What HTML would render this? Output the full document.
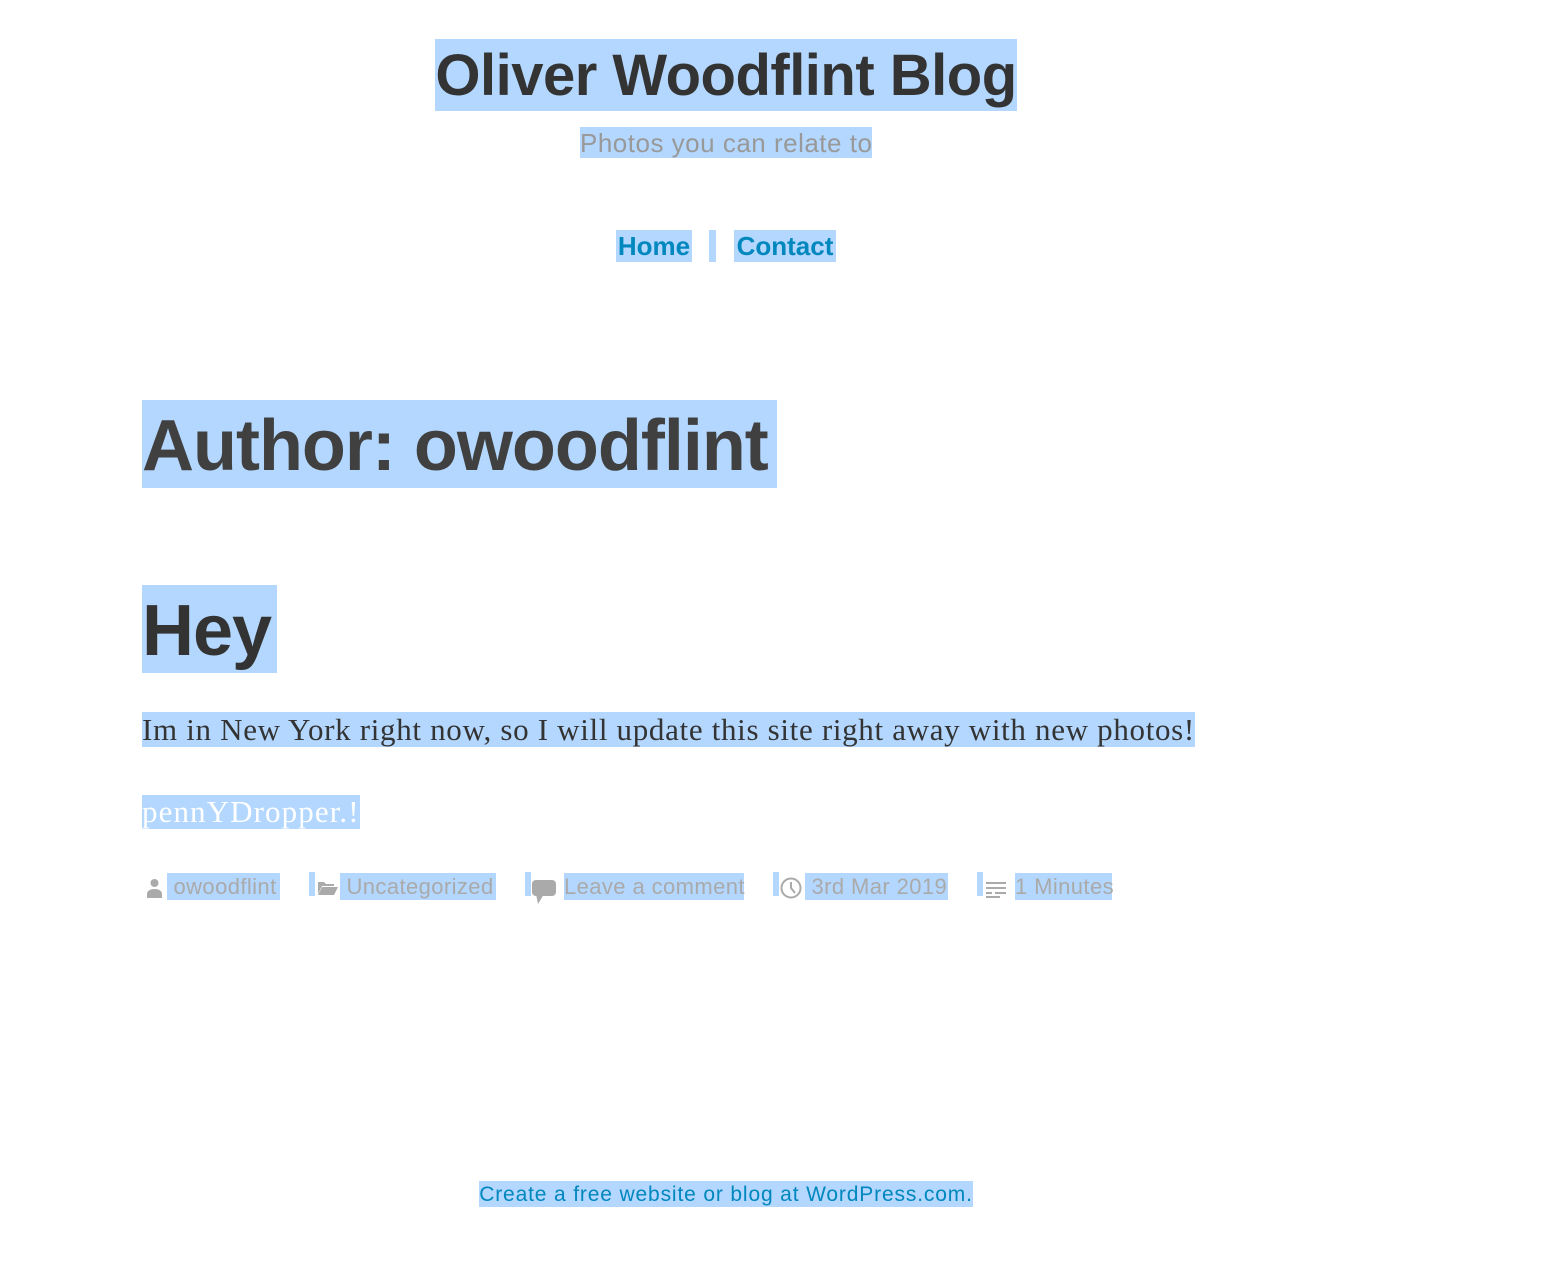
<!DOCTYPE html>
<html><head><meta charset="utf-8">
<style>
html,body{margin:0;padding:0;background:#fff;width:1560px;height:1264px;overflow:hidden;position:relative}
.b{position:absolute;background:#b3d7fe;white-space:nowrap;overflow:visible}
.s{font-family:"Liberation Sans",sans-serif}
.c{text-align:center}
.m{letter-spacing:0.4px}
svg{position:absolute}
</style></head><body>

<div class="b s c" style="left:435px;top:39px;width:582px;height:72px;line-height:74px;font-size:58px;font-weight:bold;color:#333;letter-spacing:-0.5px">Oliver Woodflint Blog</div>
<div class="b s c" style="left:580px;top:127px;width:292px;height:31px;line-height:32px;font-size:26px;color:#999;letter-spacing:0.5px">Photos you can relate to</div>

<div class="b s c" style="left:616px;top:230px;width:76px;height:32px;line-height:33px;font-size:26px;font-weight:bold;color:#0087be">Home</div>
<div class="b" style="left:709px;top:230px;width:7px;height:32px"></div>
<div class="b s c" style="left:734px;top:230px;width:102px;height:32px;line-height:33px;font-size:26px;font-weight:bold;color:#0087be">Contact</div>

<div class="b s" style="left:142px;top:400px;width:635px;height:88px;line-height:92px;font-size:72px;font-weight:bold;color:#404040;letter-spacing:-1px">Author: owoodflint</div>
<div class="b s" style="left:142px;top:585px;width:135px;height:88px;line-height:92px;font-size:72px;font-weight:bold;color:#333;letter-spacing:-1px">Hey</div>

<div class="b" style="left:142px;top:712px;width:1053px;height:35px;line-height:36px;font-family:'Liberation Serif',serif;font-size:31px;color:#333;letter-spacing:0.68px">Im in New York right now, so I will update this site right away with new photos!</div>
<div class="b" style="left:142px;top:795px;width:218px;height:34px;line-height:34px;font-family:'Liberation Serif',serif;font-size:31px;color:#fff;letter-spacing:1.1px">pennYDropper.!</div>

<!-- meta row -->
<svg style="left:146px;top:878px" width="17" height="20" viewBox="0 0 17 20"><circle cx="8.5" cy="5" r="4" fill="#aaa"/><path d="M1 20v-4c0-3 3-5 7.5-5s7.5 2 7.5 5v4z" fill="#aaa"/></svg>
<div class="b s m" style="left:167px;top:873px;width:113px;height:27px;line-height:28px;font-size:22px;color:#aaa">&nbsp;owoodflint</div>

<div class="b" style="left:309px;top:872px;width:6px;height:24px"></div>
<svg style="left:318px;top:880px" width="20" height="16" viewBox="0 0 20 16"><path d="M0 2h6l2 2h8v2H4L0 14z" fill="#aaa"/><path d="M4 7h16l-4 8H0z" fill="#aaa"/></svg>
<div class="b s m" style="left:340px;top:873px;width:156px;height:27px;line-height:28px;font-size:22px;color:#aaa">&nbsp;Uncategorized</div>

<div class="b" style="left:525px;top:872px;width:6px;height:24px"></div>
<svg style="left:532px;top:880px" width="24" height="24" viewBox="0 0 24 24"><rect x="0" y="0" width="24" height="16" rx="4" fill="#aaa"/><path d="M4 14l2 10 6-10z" fill="#aaa"/></svg>
<div class="b s m" style="left:564px;top:873px;width:180px;height:27px;line-height:28px;font-size:22px;color:#aaa">Leave a comment</div>

<div class="b" style="left:773px;top:872px;width:6px;height:24px"></div>
<svg style="left:780px;top:877px" width="22" height="22" viewBox="0 0 22 22"><circle cx="11" cy="11" r="9.5" fill="none" stroke="#aaa" stroke-width="2"/><path d="M11 5v6l4 5" fill="none" stroke="#aaa" stroke-width="2"/></svg>
<div class="b s m" style="left:805px;top:873px;width:143px;height:27px;line-height:28px;font-size:22px;color:#aaa">&nbsp;3rd Mar 2019</div>

<div class="b" style="left:977px;top:872px;width:6px;height:24px"></div>
<svg style="left:986px;top:882px" width="20" height="16" viewBox="0 0 20 16"><path d="M0 1h20M0 6h20M0 11h6M9 11h11M0 15h14" stroke="#aaa" stroke-width="2"/></svg>
<div class="b s m" style="left:1015px;top:873px;width:97px;height:27px;line-height:28px;font-size:22px;color:#aaa">1 Minutes</div>

<div class="b s c" style="left:479px;top:1181px;width:494px;height:26px;line-height:27px;font-size:21px;color:#0087be;letter-spacing:0.85px">Create a free website or blog at WordPress.com.</div>

</body></html>
